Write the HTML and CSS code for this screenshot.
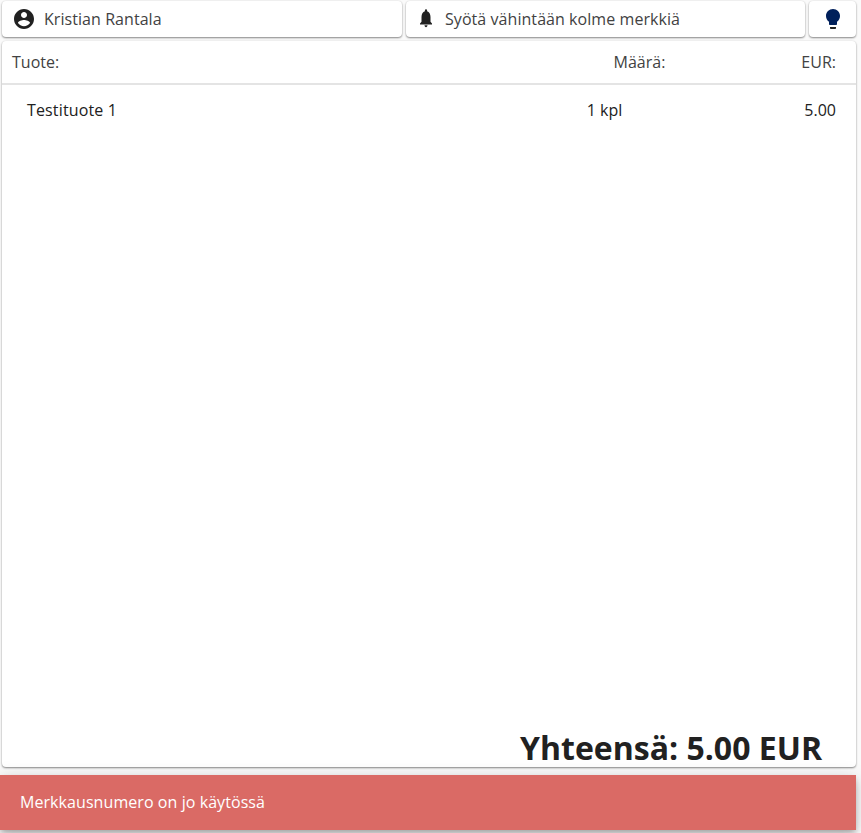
FILE: index.html
```html
<!DOCTYPE html>
<html lang="fi">
<head>
  <meta charset="UTF-8">
  <meta name="viewport" content="width=device-width, initial-scale=1.0">
  <title>Kassa</title>
  <link rel="stylesheet" href="styles.css">
</head>
<body>
  <div class="top-bar">
    <div class="card top-item user">
      <svg class="icon" viewBox="0 0 24 24"><path d="M12 2C6.48 2 2 6.48 2 12s4.48 10 10 10 10-4.48 10-10S17.52 2 12 2zm0 3c1.66 0 3 1.34 3 3s-1.34 3-3 3-3-1.34-3-3 1.34-3 3-3zm0 14.2c-2.5 0-4.71-1.28-6-3.22.03-1.99 4-3.08 6-3.08 1.99 0 5.97 1.09 6 3.08-1.29 1.94-3.5 3.22-6 3.22z"/></svg>
      <span>Kristian Rantala</span>
    </div>
    <div class="card top-item search">
      <svg class="icon bell" viewBox="0 0 24 24" preserveAspectRatio="none"><path d="M12 22c1.1 0 2-.9 2-2h-4c0 1.1.89 2 2 2zm6-6v-5c0-3.07-1.64-5.64-4.5-6.32V4c0-.83-.67-1.5-1.5-1.5s-1.5.67-1.5 1.5v.68C7.63 5.36 6 7.92 6 11v5l-2 2v1h16v-1l-2-2z"/></svg>
      <span>Syötä vähintään kolme merkkiä</span>
    </div>
    <div class="card top-item bulb">
      <svg class="icon" viewBox="0 0 24 24"><path class="bulb-base" d="M9 21c0 .55.45 1 1 1h4c.55 0 1-.45 1-1v-1H9v1z"/><path class="bulb-glass" d="M12 2C8.14 2 5 5.14 5 9c0 2.38 1.19 4.47 3 5.74V17c0 .55.45 1 1 1h6c.55 0 1-.45 1-1v-2.26c1.81-1.27 3-3.36 3-5.74 0-3.86-3.14-7-7-7z"/></svg>
    </div>
  </div>

  <div class="card receipt">
    <div class="row receipt-head">
      <span class="col-name">Tuote:</span>
      <span class="col-qty">Määrä:</span>
      <span class="col-price">EUR:</span>
    </div>
    <div class="row receipt-line">
      <span class="col-name">Testituote 1</span>
      <span class="col-qty">1 kpl</span>
      <span class="col-price">5.00</span>
    </div>
    <div class="total">Yhteensä: 5.00 EUR</div>
  </div>

  <div class="snackbar">Merkkausnumero on jo käytössä</div>
</body>
</html>
```

FILE: styles.css
```css
* {
  box-sizing: border-box;
}
html, body {
  height: 833px;
  overflow: hidden;
}
body {
  margin: 0;
  padding: 1px 5px 0 2px;
  display: flex;
  flex-direction: column;
  background: #fafafa;
  color: #212121;
  font-family: "Open Sans", sans-serif;
  font-size: 16px;
}
.card {
  background: white;
  border-radius: 4px;
  box-shadow: 0 1px 2px rgba(0,0,0,0.45), 0 0 2px rgba(0,0,0,0.08);
}
.top-bar {
  display: flex;
  gap: 4px;
  height: 36px;
}
.top-item {
  display: flex;
  align-items: center;
  color: #424242;
  letter-spacing: 0.06px;
}
.user {
  width: 400px;
  padding-left: 10px;
  gap: 8px;
}
.search {
  width: 399px;
  padding-left: 11px;
  gap: 10px;
}
.bulb {
  width: 47px;
  justify-content: center;
}
.icon {
  width: 24px;
  height: 24px;
  fill: #212121;
  flex: none;
}
.bell {
  width: 18px;
  height: 22px;
  margin-bottom: 2px;
}
.bulb-glass {
  fill: #00205b;
}
.receipt {
  width: 854px;
  height: 726px;
  margin-top: 4px;
  display: flex;
  flex-direction: column;
}
.row {
  display: flex;
}
.receipt-head {
  height: 44px;
  align-items: center;
  padding: 0 20px 1px 10px;
  border-bottom: 2px solid #e4e4e4;
  color: #424242;
}
.receipt-head .col-name {
  flex: 1;
}
.receipt-head .col-qty {
  margin-right: 136px;
}
.receipt-line {
  padding: 14px 20px 0 25px;
}
.receipt-line .col-name {
  flex: 1;
  letter-spacing: 0.15px;
}
.receipt-line .col-qty {
  margin-right: 182px;
}
.total {
  margin-top: auto;
  padding-right: 34px;
  text-align: right;
  font-size: 32px;
  font-weight: 700;
  line-height: 38px;
}
.snackbar {
  width: 856px;
  height: 55px;
  margin: 8px 0 0 -2px;
  padding: 0 0 2px 20px;
  display: flex;
  align-items: center;
  flex: none;
  background: #da6a65;
  color: #fff;
  font-size: 16px;
  font-weight: 500;
  letter-spacing: 0.07px;
  box-shadow: 0 3px 5px -1px rgba(0,0,0,0.2), 0 6px 10px rgba(0,0,0,0.14), 0 1px 18px rgba(0,0,0,0.12);
}
```
